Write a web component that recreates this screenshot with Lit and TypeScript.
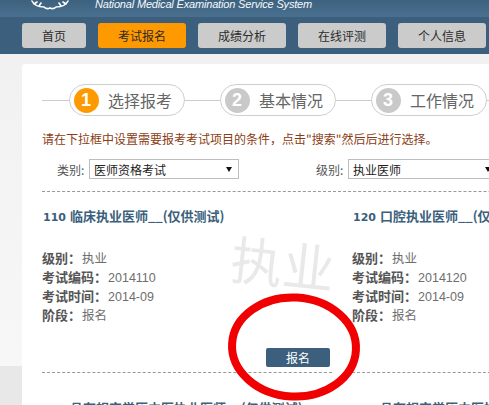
import { LitElement, html, css, svg } from "lit";
import { customElement } from "lit/decorators.js";

const COLON = "\uFF1A";
const NAV = [
  { label: "首页", wide: false, active: false },
  { label: "考试报名", wide: true, active: true },
  { label: "成绩分析", wide: true, active: false },
  { label: "在线评测", wide: true, active: false },
  { label: "个人信息", wide: true, active: false },
];
const STEPS = [
  { n: 1, label: "选择报考", active: true },
  { n: 2, label: "基本情况", active: false },
  { n: 3, label: "工作情况", active: false },
];
const NOTICE = '请在下拉框中设置需要报考考试项目的条件\uFF0C点击"搜索"然后后进行选择。';
const EXAMS = [
  { code: "110", title: "临床执业医师__(仅供测试)", no: "2014110", button: true },
  { code: "120", title: "口腔执业医师__(仅供测试)", no: "2014120", button: false },
  { code: "140", title: "具有规定学历中医执业医师__(仅供测试)", no: "2014140", button: false },
  { code: "141", title: "具有规定学历中医执业医师__(仅供测试)", no: "2014141", button: false },
];

@customElement("app-root")
export class AppRoot extends LitElement {
  static styles = css`
    :host {
      display: block;
      position: relative;
      width: 489px;
      height: 405px;
      overflow: hidden;
      font-family: "Noto Sans CJK SC", "Liberation Sans", sans-serif;
      font-size: 12px;
      background: #f0f0f0;
    }
    .brand {
      height: 17px;
      display: flex;
      align-items: flex-end;
      overflow: hidden;
      background: linear-gradient(#3d627f, #4a7090);
    }
    .logo {
      width: 42px;
      height: 10px;
      margin: 0 0 7px 29px;
      flex: none;
    }
    .en {
      margin: 0 0 6px 24px;
      font-family: "Liberation Sans", sans-serif;
      font-style: italic;
      font-size: 11px;
      letter-spacing: -0.17px;
      line-height: 14px;
      color: #f6f9fb;
      white-space: nowrap;
    }
    .nav {
      height: 37px;
      box-sizing: border-box;
      display: flex;
      gap: 12px;
      padding: 6px 0 6px 22px;
      background: #3b5f7c;
    }
    .nav-btn {
      width: 88px;
      height: 25px;
      flex: none;
      display: flex;
      align-items: center;
      justify-content: center;
      background: #cbcbcb;
      border-radius: 3px;
      color: #2b2b2b;
      line-height: 25px;
    }
    .nav-btn.narrow { width: 64px; }
    .nav-btn.on { background: #ff9900; }
    .main {
      padding: 10px 0 0 22px;
      height: 351px;
      box-sizing: border-box;
      background: linear-gradient(#f1f1f1 0, #f7f7f7 312px, #e8e8e8 312px);
    }
    .panel {
      width: 600px;
      height: 400px;
      box-sizing: border-box;
      padding: 20px 0 0 20px;
      background: #fff;
      border-radius: 3px 0 0 0;
    }
    .steps { display: flex; align-items: center; height: 32px; }
    .line { height: 1px; background: #ccc; flex: none; }
    .l0 { width: 27px; }
    .l1 { width: 35px; }
    .l2 { width: 35px; }
    .l3 { width: 20px; }
    .pill {
      box-sizing: border-box;
      height: 32px;
      width: 116px;
      flex: none;
      display: flex;
      align-items: center;
      gap: 9.5px;
      padding-left: 3.5px;
      border: 1.5px solid #cfcfcf;
      border-radius: 16px;
      color: #666;
      font-size: 16px;
    }
    .num {
      width: 25px;
      height: 25px;
      border-radius: 50%;
      flex: none;
      display: flex;
      align-items: center;
      justify-content: center;
      background: #c9c9c9;
      color: #fff;
      font: bold 18px "Liberation Sans", sans-serif;
    }
    .num.on { background: #ff9900; }
    .notice {
      margin-top: 15px;
      line-height: 16px;
      color: #8a3d14;
      white-space: nowrap;
    }
    .filters {
      display: flex;
      margin-top: 12px;
      height: 20px;
      padding-bottom: 12px;
      border-bottom: 1px dashed #999;
      align-items: center;
    }
    .flabel { color: #555; margin-left: 15px; width: 32px; flex: none; }
    .flabel.second { margin-left: 77px; }
    .select {
      box-sizing: border-box;
      width: 150px;
      height: 20px;
      flex: none;
      display: flex;
      align-items: center;
      justify-content: space-between;
      padding: 0 6px 0 4px;
      border: 1px solid #bdbdbd;
      color: #222;
    }
    .select svg { width: 6px; height: 5px; }
    .grid {
      display: grid;
      grid-template-columns: 290px 290px;
      column-gap: 20px;
      row-gap: 11px;
    }
    .cell {
      height: 181px;
      box-sizing: border-box;
      padding-top: 16px;
      border-bottom: 1px dashed #999;
      display: flex;
      flex-direction: column;
    }
    .title {
      line-height: 16px;
      font-weight: bold;
      font-size: 13px;
      color: #3b5f7c;
      white-space: nowrap;
    }
    .code {
      font-family: "DejaVu Sans", sans-serif;
      font-size: 11px;
      margin-left: 1px;
      margin-right: 4px;
    }
    .meta {
      margin-top: 22px;
      line-height: 19px;
      color: #6e6e6e;
      font-family: "Liberation Sans", "Noto Sans CJK SC", sans-serif;
      font-size: 12.5px;
    }
    .row { display: flex; align-items: baseline; white-space: nowrap; height: 19px; }
    .row b {
      color: #555;
      font-family: "Noto Sans CJK SC", sans-serif;
      font-size: 13px;
      margin-right: 1px;
    }
    .apply {
      align-self: flex-end;
      width: 64px;
      height: 19px;
      margin: 24px 2px 0 0;
      border-radius: 2px;
      display: flex;
      align-items: center;
      justify-content: center;
      background: #3b5f7c;
      color: #fff;
      line-height: 19px;
    }
    .mark {
      position: absolute;
      left: 231px;
      top: 229px;
      font-size: 52px;
      line-height: 66px;
      color: #e9e9e9;
      transform: rotate(6deg);
      white-space: nowrap;
    }
    .ring {
      position: absolute;
      left: 222px;
      top: 287px;
      width: 140px;
      height: 117px;
      pointer-events: none;
    }
  `;

  private exam(e: (typeof EXAMS)[number]) {
    return html`<div class="cell">
      <div class="title"><span class="code">${e.code}</span>${e.title}</div>
      <div class="meta">
        <div class="row"><b>级别${COLON}</b>执业</div>
        <div class="row"><b>考试编码${COLON}</b>${e.no}</div>
        <div class="row"><b>考试时间${COLON}</b>2014-09</div>
        <div class="row"><b>阶段${COLON}</b>报名</div>
      </div>
      ${e.button ? html`<div class="apply">报名</div>` : ""}
    </div>`;
  }

  render() {
    const laurel = svg`<path d="M3 1c2 4 6 6 12 6M39 1c-2 4-6 6-12 6M15 7c2 2 4 2 6 1 2 1 4 1 6-1M5 4l3-2M10 6l2-3M37 4l-3-2M32 6l-2-3" fill="none" stroke="#fff" stroke-width="1.6" stroke-linecap="round"/>`;
    return html`
      <div class="brand">
        <svg class="logo" viewBox="0 0 42 10">${laurel}</svg>
        <div class="en">National Medical Examination Service System</div>
      </div>
      <nav class="nav">
        ${NAV.map(
          (n) => html`<div class="nav-btn ${n.wide ? "" : "narrow"} ${n.active ? "on" : ""}">${n.label}</div>`
        )}
      </nav>
      <div class="main">
        <div class="panel">
          <div class="steps">
            <div class="line l0"></div>
            ${STEPS.map(
              (s, i) => html`<div class="pill">
                  <span class="num ${s.active ? "on" : ""}">${s.n}</span>${s.label}
                </div>
                <div class="line ${"l" + (i + 1)}"></div>`
            )}
          </div>
          <div class="notice">${NOTICE}</div>
          <div class="filters">
            <span class="flabel">类别:</span>
            <div class="select">医师资格考试<svg viewBox="0 0 6 5"><path d="M0 0h6L3 5z" fill="#111"/></svg></div>
            <span class="flabel second">级别:</span>
            <div class="select">执业医师<svg viewBox="0 0 6 5"><path d="M0 0h6L3 5z" fill="#111"/></svg></div>
          </div>
          <div class="grid">${EXAMS.map((e) => this.exam(e))}</div>
        </div>
      </div>
      <div class="mark">执业</div>
      <svg class="ring" viewBox="0 0 140 117">
        <ellipse cx="72" cy="60" rx="62" ry="49.5" fill="none" stroke="#f00000" stroke-width="8" transform="rotate(3 72 60)"/>
      </svg>
    `;
  }
}
